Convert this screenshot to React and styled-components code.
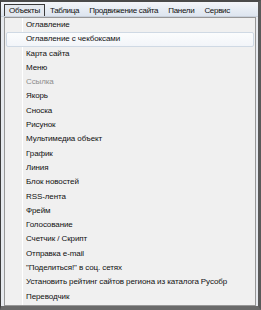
import React from 'react'
import styled, { createGlobalStyle } from 'styled-components'

const Global = createGlobalStyle`
  html, body { margin: 0; padding: 0; background: #ffffff; }
  * { box-sizing: border-box; }
`

const topMenu = ['Объекты', 'Таблица', 'Продвижение сайта', 'Панели', 'Сервис']

const items = [
  { label: 'Оглавление' },
  { label: 'Оглавление с чекбоксами', hover: true },
  { label: 'Карта сайта' },
  { label: 'Меню' },
  { label: 'Ссылка', disabled: true },
  { label: 'Якорь' },
  { label: 'Сноска' },
  { label: 'Рисунок' },
  { label: 'Мультимедиа объект' },
  { label: 'График' },
  { label: 'Линия' },
  { label: 'Блок новостей' },
  { label: 'RSS-лента' },
  { label: 'Фрейм' },
  { label: 'Голосование' },
  { label: 'Счетчик / Скрипт' },
  { label: 'Отправка e-mail' },
  { label: '"Поделиться!" в соц. сетях' },
  { label: 'Установить рейтинг сайтов региона из каталога Русобр' },
  { label: 'Переводчик' },
]

export default function App() {
  return (
    <>
      <Global />
      <Window>
        <MenuBar>
          {topMenu.map((m, i) => (
            <TopItem key={m} $open={i === 0}>{m}</TopItem>
          ))}
        </MenuBar>
        <Dropdown>
          <Gutter />
          {items.map((it) => (
            <Item key={it.label} $hover={it.hover} $disabled={it.disabled}>
              {it.label}
            </Item>
          ))}
        </Dropdown>
      </Window>
    </>
  )
}

const Window = styled.div`
width: 261px;
height: 310px;
border: 1px solid #3c3c3c;
border-top: 2px solid #4a4a4a;
border-right: 3px solid #5a5a5a;
border-bottom: 4px solid #6a6a6a;
background: #e6e9ee;
font-family: 'Liberation Sans', Arial, sans-serif;
font-size: 8px;
letter-spacing: -0.1px;
color: #111111;
display: flex;
flex-direction: column;
`

const MenuBar = styled.div`
height: 15px;
display: flex;
align-items: flex-end;
padding-left: 3px;
background: linear-gradient(#f3f5f9, #dde5ef);
border-bottom: 1px solid #c9d1dc;
`

const TopItem = styled.div`
height: 12px;
line-height: 11px;
padding: 0 4px;
letter-spacing: -0.3px;
white-space: nowrap;
border: 1px solid ${(p) => (p.$open ? '#3a3a3a' : 'transparent')};
border-bottom: none;
background: ${(p) => (p.$open ? '#e4e8ee' : 'transparent')};
`

const Dropdown = styled.div`
position: relative;
margin-left: 3px;
width: 252px;
flex: 1;
border: 1px solid #979797;
background: #f0f0f0;
padding: 0 1px;
`

const Gutter = styled.div`
position: absolute;
left: 17px;
top: 0;
bottom: 0;
width: 1px;
background: #e2e3e3;
border-right: 1px solid #ffffff;
`

const Item = styled.div`
position: relative;
height: 14.3px;
line-height: 12.3px;
padding-left: 19px;
white-space: nowrap;
border: 1px solid ${(p) => (p.$hover ? '#cfd9e4' : 'transparent')};
border-radius: 2px;
background: ${(p) => (p.$hover ? 'linear-gradient(#fbfcfd, #f2f5f9)' : 'transparent')};
color: ${(p) => (p.$disabled ? '#8d8d8d' : '#111111')};
`
